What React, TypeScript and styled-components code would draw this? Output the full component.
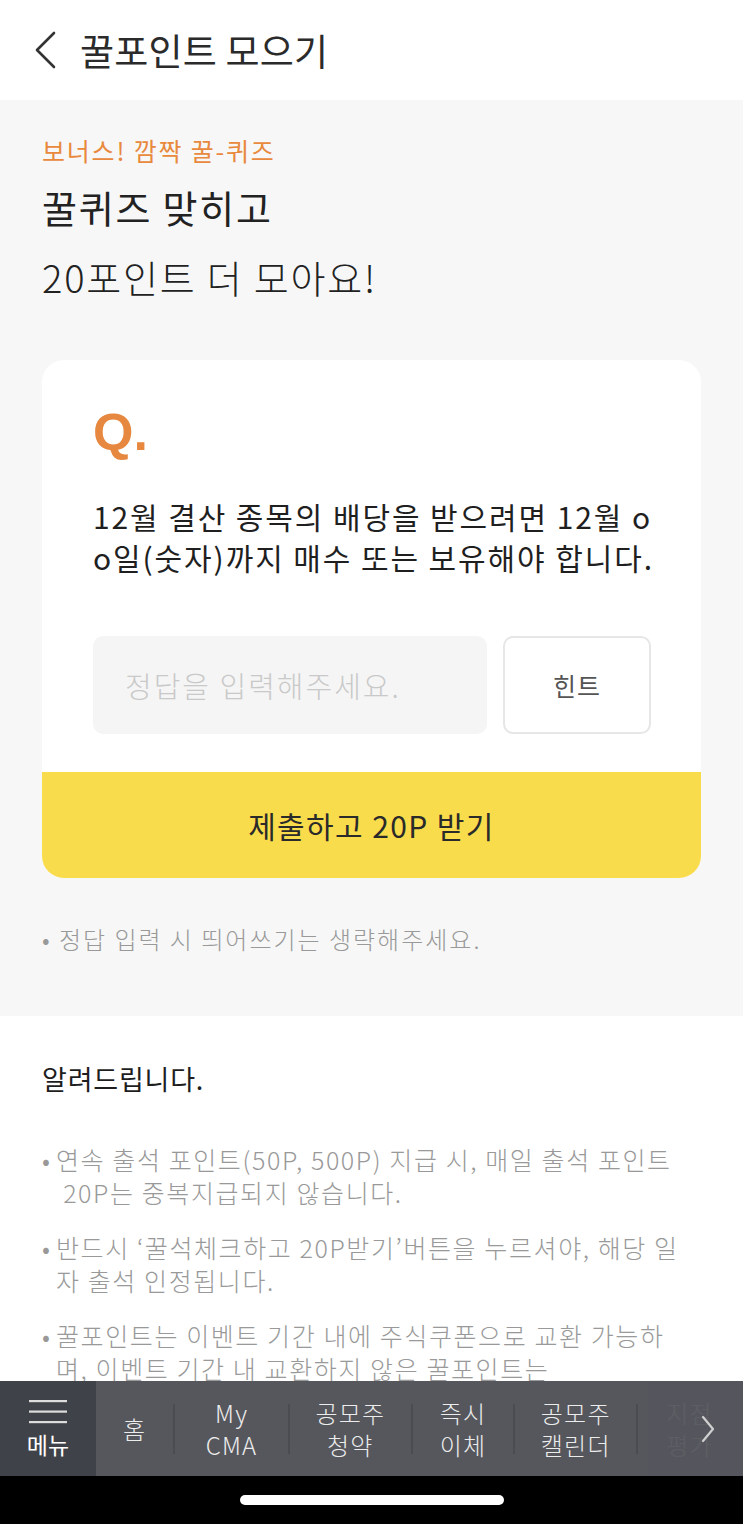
import React from 'react';
import styled, { createGlobalStyle } from 'styled-components';

const GlobalStyle = createGlobalStyle`
    html, body {
        margin: 0;
        padding: 0;
        background: #ffffff;
    }
    body {
        font-family: "Noto Sans CJK KR", "Noto Sans", sans-serif;
        color: #222222;
        -webkit-font-smoothing: antialiased;
    }
    * {
        box-sizing: border-box;
    }
`;

const Screen = styled.div`
    display: flex;
    flex-direction: column;
    width: 100%;
    height: 1524px;
    overflow: hidden;
`;

const Header = styled.header`
    display: flex;
    align-items: center;
    gap: 20px;
    height: 100px;
    padding-left: 32px;
    background: #ffffff;
    flex-shrink: 0;
`;

const BackButton = styled.button`
    display: flex;
    align-items: center;
    justify-content: center;
    width: 28px;
    height: 40px;
    padding: 0;
    border: none;
    background: none;
`;

const HeaderTitle = styled.h1`
    margin: 0;
    font-size: 37px;
    font-weight: 400;
    letter-spacing: 0.2px;
    color: #2b2b2b;
    line-height: 1;
`;

const Content = styled.main`
    flex: 1;
    overflow: hidden;
`;

const QuizSection = styled.section`
    background: #f7f7f7;
    padding: 32px 42px 60px;
`;

const Eyebrow = styled.div`
    font-size: 25px;
    line-height: 36px;
    letter-spacing: 1.8px;
    color: #e8893d;
    font-weight: 400;
`;

const Headline = styled.h2`
    margin: 4px 0 0;
    font-size: 38px;
    line-height: 70px;
    font-weight: 400;
    color: #222222;
    letter-spacing: 1.8px;
`;

const HeadlineStrong = styled.span`
    font-weight: 400;
`;

const HeadlineLight = styled.span`
    font-weight: 300;
`;

const QuizCard = styled.div`
    margin-top: 48px;
    background: #ffffff;
    border-radius: 22px;
    overflow: hidden;
`;

const CardBody = styled.div`
    padding: 42px 50px 38px 51px;
`;

const QMark = styled.div`
    font-family: "Liberation Sans", "Noto Sans", sans-serif;
    font-size: 52px;
    line-height: 60px;
    font-weight: 700;
    color: #e6883f;
`;

const Question = styled.p`
    margin: 34px 0 0;
    font-size: 30px;
    line-height: 41px;
    letter-spacing: 1.9px;
    color: #1f1f1f;
    white-space: nowrap;
`;

const AnswerRow = styled.div`
    display: grid;
    grid-template-columns: minmax(0, 1fr) 148px;
    gap: 16px;
    margin-top: 58px;
`;

const AnswerInput = styled.input`
    width: 100%;
    min-width: 0;
    height: 98px;
    border: none;
    border-radius: 10px;
    background: #f5f5f5;
    padding: 0 32px;
    font-family: inherit;
    font-size: 29px;
    letter-spacing: 2px;
    font-weight: 300;
    color: #333333;
    outline: none;

    &::placeholder {
        color: #c9c9c9;
    }
`;

const HintButton = styled.button`
    height: 98px;
    border: 2px solid #e6e6e6;
    border-radius: 10px;
    background: #ffffff;
    font-family: inherit;
    font-size: 25px;
    letter-spacing: 1px;
    font-weight: 400;
    color: #555555;
`;

const SubmitButton = styled.button`
    display: block;
    width: 100%;
    height: 106px;
    border: none;
    background: #f9dc4b;
    font-family: inherit;
    font-size: 30px;
    letter-spacing: 1.4px;
    font-weight: 400;
    color: #2a2a2a;
`;

const Note = styled.p`
    margin: 44px 0 0;
    font-size: 24px;
    line-height: 34px;
    letter-spacing: 2px;
    font-weight: 300;
    color: #999999;
`;

const NoticeSection = styled.section`
    background: #ffffff;
    padding: 43px 42px 0;
`;

const NoticeTitle = styled.h3`
    margin: 0;
    font-size: 27px;
    line-height: 40px;
    letter-spacing: 0.8px;
    font-weight: 400;
    color: #1e1e1e;
`;

const NoticeList = styled.ul`
    list-style: none;
    margin: 44px 0 0;
    padding: 0;
    display: flex;
    flex-direction: column;
    gap: 22px;
`;

const NoticeItem = styled.li`
    display: flex;
    font-size: 25px;
    line-height: 33px;
    letter-spacing: 1.6px;
    font-weight: 300;
    color: #999999;
    white-space: nowrap;
`;

const Bullet = styled.span`
    flex: 0 0 14px;
    letter-spacing: 0;
`;

const NavBar = styled.nav`
    position: relative;
    display: flex;
    align-items: stretch;
    height: 95px;
    background: #55575d;
    flex-shrink: 0;
    overflow: hidden;
`;

const MenuButton = styled.div`
    display: flex;
    flex-direction: column;
    align-items: center;
    justify-content: center;
    gap: 6px;
    flex: 0 0 96px;
    background: #404249;
    color: #ffffff;
    font-size: 23px;
    line-height: 28px;
`;

const NavItems = styled.div`
    display: flex;
    align-items: center;
`;

const NavItem = styled.div<{ $faded?: boolean; $pad?: number }>`
    padding: 0 ${(p) => p.$pad ?? 28}px;
    text-align: center;
    font-size: 24px;
    line-height: 32px;
    letter-spacing: 1.2px;
    font-weight: 300;
    color: ${(p) => (p.$faded ? '#7f8186' : '#ececec')};
    white-space: nowrap;
`;

const Divider = styled.span`
    flex: 0 0 2px;
    height: 50px;
    background: #4a4c52;
`;

const NavMore = styled.div`
    position: absolute;
    top: 0;
    right: 0;
    bottom: 0;
    width: 95px;
    display: flex;
    align-items: center;
    justify-content: flex-end;
    padding-right: 28px;
    background: rgba(85, 87, 93, 0.82);
`;

const HomeBar = styled.div`
    display: flex;
    align-items: center;
    justify-content: center;
    height: 48px;
    background: #000000;
    flex-shrink: 0;
`;

const HomeIndicator = styled.span`
    width: 264px;
    height: 10px;
    border-radius: 5px;
    background: #ffffff;
`;

const notices = [
    ['연속 출석 포인트(50P, 500P) 지급 시, 매일 출석 포인트', '\u00a020P는 중복지급되지 않습니다.'],
    ['반드시 ‘꿀석체크하고 20P받기’버튼을 누르셔야, 해당 일', '자 출석 인정됩니다.'],
    ['꿀포인트는 이벤트 기간 내에 주식쿠폰으로 교환 가능하', '며, 이벤트 기간 내 교환하지 않은 꿀포인트는', '이벤트 종료 후 소멸됩니다.'],
];

const navItems: { lines: string[]; pad: number }[] = [
    { lines: ['홈'], pad: 27 },
    { lines: ['My', 'CMA'], pad: 30.5 },
    { lines: ['공모주', '청약'], pad: 25.5 },
    { lines: ['즉시', '이체'], pad: 27 },
    { lines: ['공모주', '캘린더'], pad: 25.5 },
];

const Lines: React.FC<{ lines: string[] }> = ({ lines }) => (
    <>
        {lines.map((line, i) => (
            <React.Fragment key={i}>
                {i > 0 && <br />}
                {line}
            </React.Fragment>
        ))}
    </>
);

const App: React.FC = () => {
    return (
        <>
            <GlobalStyle />
            <Screen>
                <Header>
                    <BackButton aria-label="뒤로">
                        <svg width="24" height="38" viewBox="0 0 24 38">
                            <polyline points="20,2 3,19 20,36" fill="none" stroke="#333" strokeWidth="2.6" strokeLinecap="round" strokeLinejoin="round" />
                        </svg>
                    </BackButton>
                    <HeaderTitle>꿀포인트 모으기</HeaderTitle>
                </Header>

                <Content>
                    <QuizSection>
                        <Eyebrow>보너스! 깜짝 꿀-퀴즈</Eyebrow>
                        <Headline>
                            <HeadlineStrong>꿀퀴즈 맞히고</HeadlineStrong>
                            <br />
                            <HeadlineLight>20포인트 더 모아요!</HeadlineLight>
                        </Headline>

                        <QuizCard>
                            <CardBody>
                                <QMark>Q.</QMark>
                                <Question>
                                    12월 결산 종목의 배당을 받으려면 12월 o
                                    <br />
                                    o일(숫자)까지 매수 또는 보유해야 합니다.
                                </Question>
                                <AnswerRow>
                                    <AnswerInput placeholder="정답을 입력해주세요." />
                                    <HintButton>힌트</HintButton>
                                </AnswerRow>
                            </CardBody>
                            <SubmitButton>제출하고 20P 받기</SubmitButton>
                        </QuizCard>

                        <Note>• 정답 입력 시 띄어쓰기는 생략해주세요.</Note>
                    </QuizSection>

                    <NoticeSection>
                        <NoticeTitle>알려드립니다.</NoticeTitle>
                        <NoticeList>
                            {notices.map((lines, i) => (
                                <NoticeItem key={i}>
                                    <Bullet>•</Bullet>
                                    <span>
                                        <Lines lines={lines} />
                                    </span>
                                </NoticeItem>
                            ))}
                        </NoticeList>
                    </NoticeSection>
                </Content>

                <NavBar>
                    <MenuButton>
                        <svg width="38" height="24" viewBox="0 0 38 24">
                            <rect x="0" y="0" width="38" height="2.2" fill="#dddddd" />
                            <rect x="0" y="10.5" width="38" height="2.2" fill="#dddddd" />
                            <rect x="0" y="21" width="38" height="2.2" fill="#dddddd" />
                        </svg>
                        <span>메뉴</span>
                    </MenuButton>
                    <NavItems>
                        {navItems.map((item, i) => (
                            <React.Fragment key={i}>
                                {i > 0 && <Divider />}
                                <NavItem $pad={item.pad}>
                                    <Lines lines={item.lines} />
                                </NavItem>
                            </React.Fragment>
                        ))}
                        <Divider />
                        <NavItem $faded>
                            <Lines lines={['지점', '평가']} />
                        </NavItem>
                    </NavItems>
                    <NavMore>
                        <svg width="14" height="28" viewBox="0 0 14 28">
                            <polyline points="2,2 12,14 2,26" fill="none" stroke="#cfcfcf" strokeWidth="2.2" strokeLinecap="round" strokeLinejoin="round" />
                        </svg>
                    </NavMore>
                </NavBar>

                <HomeBar>
                    <HomeIndicator />
                </HomeBar>
            </Screen>
        </>
    );
};

export default App;
